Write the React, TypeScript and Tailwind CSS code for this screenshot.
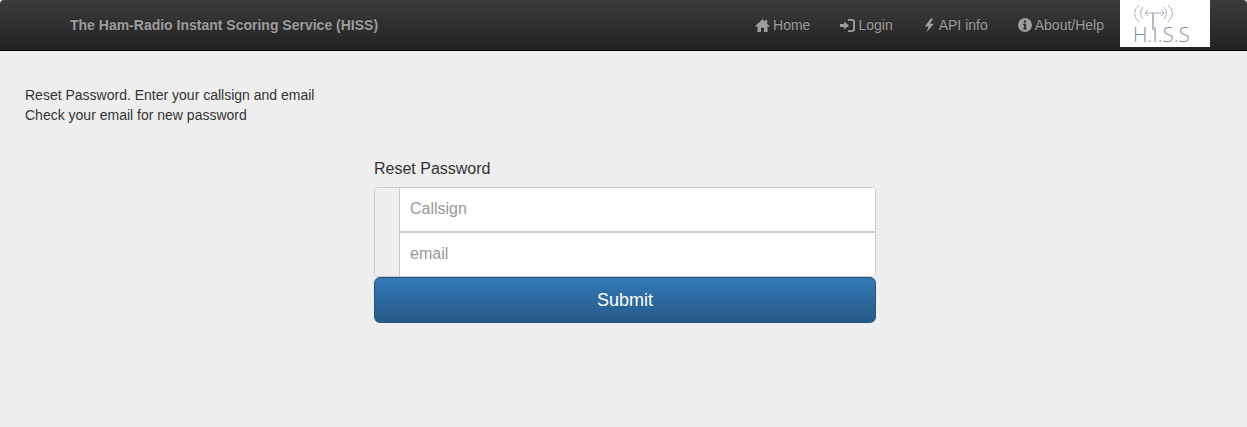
function HomeIcon() {
  return (
    <svg width="15" height="15" viewBox="0 0 16 16" fill="currentColor">
      <path d="M8 1.2 0.3 8.6 1.4 9.6 2.6 8.6V15H6.4V10.4H9.6V15H13.4V8.6L14.6 9.6 15.7 8.6 13 6V2.2H11V4.1Z" />
    </svg>
  );
}

function LoginIcon() {
  return (
    <svg width="15" height="15" viewBox="0 0 16 16" fill="currentColor">
      <path d="M0 6.4H4.4V3.6L9.6 8 4.4 12.4V9.6H0Z" />
      <path d="M8.5 2H12.8C14 2 15 3 15 4.2V11.8C15 13 14 14 12.8 14H8.5" fill="none" stroke="currentColor" strokeWidth="2" />
    </svg>
  );
}

function BoltIcon() {
  return (
    <svg width="13" height="15" viewBox="0 0 12 16" fill="currentColor">
      <path d="M7.2 0.5 1 9H5L2.6 15.5 10.8 6.2H6.6L10 0.5Z" />
    </svg>
  );
}

function InfoIcon() {
  return (
    <svg width="14" height="14" viewBox="0 0 14 14" fill="currentColor">
      <path
        fillRule="evenodd"
        d="M7 0a7 7 0 1 0 0 14A7 7 0 0 0 7 0ZM5.9 2.6h2.2v2.1H5.9ZM5 5.8h3.1v4.6H9v1.2H5v-1.2h.9V7H5Z"
      />
    </svg>
  );
}

function NavItem({ icon, label }: { icon: React.ReactNode; label: string }) {
  return (
    <a className="flex items-center gap-[3px] px-[15px] text-sm text-[#9d9d9d] [text-shadow:0_-1px_0_rgba(0,0,0,0.25)]">
      {icon}
      {label}
    </a>
  );
}

function Logo() {
  return (
    <div className="flex h-[47px] w-[90px] flex-col items-start bg-white pl-[13px]">
      <svg width="42" height="28" viewBox="0 0 42 28" fill="none" stroke="#a9b2bc" strokeWidth="1" className="mt-[2px] shrink-0">
        <path d="M20 11V28" stroke="#66758a" />
        <path d="M12 11H31M12 11l3-3M12 11l3 3M31 11l-3-3M31 11l-3 3" />
        <path d="M10 5Q5 11 10 17M6 3Q-3 11 6 20M31 5Q36 11 31 17M35 3Q44 11 35 20" />
      </svg>
      <span className="-mt-[5px] whitespace-nowrap font-['Open_Sans',sans-serif] text-[20px] leading-[20px] font-light tracking-[0.2px] text-[#7f8d9c]">
        H.I.S.S
      </span>
    </div>
  );
}

export default function App() {
  return (
    <div className="min-h-[427px] bg-[#eeeeee] font-['Liberation_Sans',sans-serif] text-sm leading-5 text-[#333333]">
      <nav className="flex h-[51px] items-start justify-between rounded-tl-[4px] rounded-tr-[4px] border-b border-[#080808] bg-gradient-to-b from-[#3c3c3c] to-[#222222]">
        <a className="ml-[70px] flex h-[50px] items-center text-sm font-bold text-[#9d9d9d] [text-shadow:0_-1px_0_rgba(0,0,0,0.25)]">
          The Ham-Radio Instant Scoring Service (HISS)
        </a>
        <div className="mr-[37px] flex items-start">
          <div className="flex h-[50px] items-stretch pr-px">
            <NavItem icon={<HomeIcon />} label="Home" />
            <NavItem icon={<LoginIcon />} label="Login" />
            <NavItem icon={<BoltIcon />} label="API info" />
            <NavItem icon={<InfoIcon />} label="About/Help" />
          </div>
          <Logo />
        </div>
      </nav>

      <div className="pt-[34px] pl-[25px]">
        <p>Reset Password. Enter your callsign and email</p>
        <p>Check your email for new password</p>
      </div>

      <form className="mt-[33px] ml-[374px] w-[502px]">
        <h2 className="mb-[7px] text-base leading-[22px] font-normal">Reset Password</h2>
        <div className="flex h-[90px] overflow-hidden rounded-[4px] border border-[#cccccc] bg-white">
          <div className="w-[25px] border-r border-[#cccccc] bg-[#eeeeee]" />
          <div className="flex flex-1 flex-col">
            <input
              placeholder="Callsign"
              className="h-[45px] border-b-2 border-[#cccccc] bg-white px-[10px] pb-px text-base outline-none placeholder:text-[#999999]"
            />
            <input
              placeholder="email"
              className="h-[43px] bg-white px-[10px] pb-px text-base outline-none placeholder:text-[#999999]"
            />
          </div>
        </div>
        <button
          type="button"
          className="h-[46px] w-full rounded-[6px] border border-[#245580] bg-gradient-to-b from-[#337ab7] to-[#265a88] text-lg text-white"
        >
          Submit
        </button>
      </form>
    </div>
  );
}
